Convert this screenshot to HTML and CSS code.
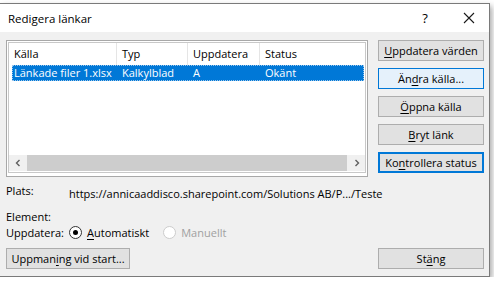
FILE: index.html
```html
<!DOCTYPE html>
<html lang="sv">
<head>
    <meta charset="UTF-8">
    <title>Redigera länkar</title>
    <link rel="stylesheet" href="styles.css">
</head>
<body>

    <div class="dialog">
        <!-- Title bar -->
        <div class="titlebar">
            <span class="title">Redigera länkar</span>
            <span class="help">?</span>
            <span class="close">
                <svg width="12" height="12" viewBox="0 0 12 12">
                    <path d="M1 1 L11 11 M11 1 L1 11" stroke="#1a1a1a" stroke-width="1.1" fill="none"/>
                </svg>
            </span>
        </div>

        <div class="body">
            <div class="top">
                <!-- Link list -->
                <div class="listbox">
                    <div class="listinner">
                        <div class="list-head">
                            <div class="col c1">Källa</div>
                            <div class="col c2">Typ</div>
                            <div class="col c3">Uppdatera</div>
                            <div class="col c4">Status</div>
                        </div>
                        <div class="list-row selected">
                            <div class="col c1">Länkade filer 1.xlsx</div>
                            <div class="col c2">Kalkylblad</div>
                            <div class="col c3">A</div>
                            <div class="col c4">Okänt</div>
                        </div>
                        <div class="list-fill"></div>
                        <div class="hscroll">
                            <span class="arrow">
                                <svg width="8" height="8" viewBox="0 0 8 8"><path d="M5.5 1 L2.5 4 L5.5 7" stroke="#606060" stroke-width="1.4" fill="none"/></svg>
                            </span>
                            <span class="thumb"></span>
                            <span class="arrow">
                                <svg width="8" height="8" viewBox="0 0 8 8"><path d="M2.5 1 L5.5 4 L2.5 7" stroke="#606060" stroke-width="1.4" fill="none"/></svg>
                            </span>
                        </div>
                    </div>
                </div>

                <!-- Action buttons -->
                <div class="actions">
                    <button class="btn"><u>U</u>ppdatera värden</button>
                    <button class="btn hover">Än<u>d</u>ra källa...</button>
                    <button class="btn"><u>Ö</u>ppna källa</button>
                    <button class="btn"><u>B</u>ryt länk</button>
                    <button class="btn focus">Ko<u>n</u>trollera status</button>
                </div>
            </div>

            <!-- Details -->
            <div class="details">
                <div class="plats">
                    <span class="label">Plats:</span>
                    <span class="url">https://annicaaddisco.sharepoint.com/Solutions AB/P.../Teste</span>
                </div>
                <div class="element">Element:</div>
                <div class="update-row">
                    <span class="label">Uppdatera:</span>
                    <span class="radio checked"></span>
                    <span class="radio-text"><u>A</u>utomatiskt</span>
                    <span class="radio disabled"></span>
                    <span class="radio-text disabled">Manuellt</span>
                </div>
            </div>

            <div class="footer">
                <button class="btn wide">Uppman<u>i</u>ng vid start...</button>
                <button class="btn">St<u>ä</u>ng</button>
            </div>
        </div>
    </div>

</body>
</html>
```

FILE: styles.css
```css
/* General */
body {
    margin: 0;
    background: #ffffff;
    font-family: 'Open Sans', 'Liberation Sans', sans-serif;
    font-size: 11px;
    line-height: 15px;
    color: #000;
}

u {
    text-decoration-thickness: 1px;
    text-underline-offset: 2px;
}

/* Dialog frame */
.dialog {
    margin-top: 3px;
    width: 489px;
    height: 272px;
    border: 1px solid #7a7a7a;
    border-left: none;
    background: #f0f0f0;
    box-shadow: 2px 3px 6px rgba(0, 0, 0, 0.35);
    display: flex;
    flex-direction: column;
}

.titlebar {
    height: 28px;
    background: #ffffff;
    display: flex;
    align-items: center;
    padding-left: 8px;
    font-size: 11.5px;
}

.title {
    flex: 1;
}

.help {
    width: 30px;
    font-size: 13px;
    margin-right: 14px;
    text-align: center;
}

.close {
    width: 30px;
    display: flex;
    justify-content: center;
    margin-right: 5px;
}

.body {
    flex: 1;
    padding: 8px 5px 7px 6px;
    display: flex;
    flex-direction: column;
}

.top {
    display: flex;
    gap: 10px;
}

/* List view */
.listbox {
    width: 361px;
    height: 133px;
    border: 1px solid #a8a8a8;
    padding: 1px;
    background: #ffffff;
}

.listinner {
    height: 131px;
    border: 1px solid #c8c8c8;
    box-sizing: border-box;
    display: flex;
    flex-direction: column;
}

.list-head,
.list-row {
    display: flex;
    white-space: nowrap;
}

.list-head {
    height: 22px;
    align-items: center;
}

.list-head .col {
    border-right: 1px solid #e5e5e5;
    height: 22px;
    line-height: 22px;
}

.list-row {
    height: 16px;
    line-height: 16px;
    margin-left: 3px;
    margin-right: 1px;
}

.list-row.selected {
    background: #0078d7;
    color: #ffffff;
    outline: 1px dotted #9cc7ec;
    outline-offset: -1px;
}

.col {
    box-sizing: border-box;
    padding-left: 5px;
}

.list-head .c1 { width: 108px; padding-left: 5px; }
.list-row .c1 { width: 105px; padding-left: 2px; }
.c2 { width: 71px; }
.c3 { width: 72px; }
.c4 { flex: 1; border-right: none !important; }

.list-fill {
    flex: 1;
}

.hscroll {
    height: 16px;
    display: flex;
    align-items: stretch;
    background: #f0f0f0;
    margin-bottom: 1px;
}

.arrow {
    width: 17px;
    display: flex;
    align-items: center;
    justify-content: center;
}

.thumb {
    flex: 1;
    background: #cdcdcd;
    margin: 0 1px;
}

/* Buttons */
.actions {
    display: flex;
    flex-direction: column;
    gap: 7px;
}

.btn {
    width: 106px;
    height: 21px;
    padding: 0;
    background: #e1e1e1;
    border: 1px solid #adadad;
    font-family: 'Open Sans', 'Liberation Sans', sans-serif;
    font-size: 11px;
    color: #000;
}

.btn.hover {
    background: #e5f1fb;
    border-color: #0078d7;
}

.btn.focus {
    border: 2px solid #0078d7;
}

.btn.wide {
    width: 124px;
}

/* Details */
.details {
    padding-top: 6px;
    flex: 1;
}

.plats {
    display: flex;
    height: 22px;
}

.plats .label {
    width: 63px;
}

.url {
    padding-top: 3px;
}

.element {
    margin-top: 4px;
    height: 14px;
}

.update-row {
    display: flex;
    align-items: center;
    height: 18px;
}

.update-row .label {
    width: 63px;
}

.radio {
    width: 11px;
    height: 11px;
    border-radius: 50%;
    border: 1px solid #333;
    background: #fff;
    margin-right: 5px;
    position: relative;
}

.radio.checked::after {
    content: "";
    position: absolute;
    left: 3px;
    top: 3px;
    width: 5px;
    height: 5px;
    border-radius: 50%;
    background: #000;
}

.radio.disabled {
    border-color: #cccccc;
    margin-left: 14px;
}

.radio-text.disabled {
    color: #a0a0a0;
}

.footer {
    display: flex;
    justify-content: space-between;
}
```
